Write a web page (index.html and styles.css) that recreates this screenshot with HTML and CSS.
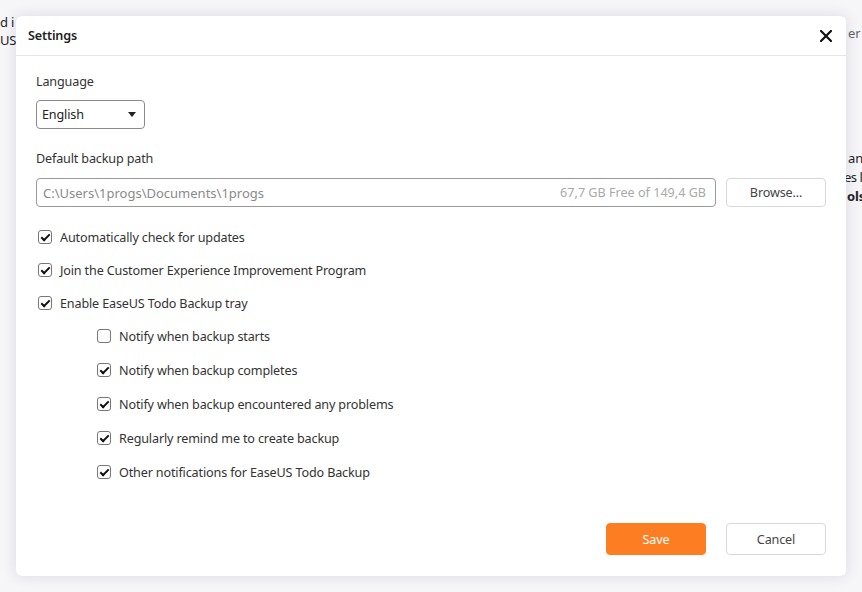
FILE: index.html
```html
<!DOCTYPE html>
<html>

<head>
    <title>Settings</title>
    <link rel="stylesheet" href="styles.css">
</head>

<body>

    <!-- app behind the dialog -->
    <div class="backdrop">
        <span class="bg-text bg-1">d i</span>
        <span class="bg-text bg-2">US</span>
        <span class="bg-text bg-3">er</span>
        <span class="bg-text bg-4">an</span>
        <span class="bg-text bg-5">es l</span>
        <span class="bg-text bg-6">ols</span>
    </div>

    <div class="dialog">
        <div class="dialog-header">
            <span class="dialog-title">Settings</span>
            <button class="close-btn">
                <svg width="12" height="12" viewBox="0 0 12 12">
                    <path d="M1 1 L11 11 M11 1 L1 11" stroke="#111" stroke-width="2.2" stroke-linecap="square" />
                </svg>
            </button>
        </div>

        <div class="dialog-body">
            <div class="label">Language</div>
            <div class="select">
                <span>English</span>
                <span class="caret"></span>
            </div>

            <div class="label label-path">Default backup path</div>
            <div class="path-row">
                <div class="path-input">
                    <span class="path">C:\Users\1progs\Documents\1progs</span>
                    <span class="free">67,7 GB Free of 149,4 GB</span>
                </div>
                <button class="btn btn-browse">Browse...</button>
            </div>

            <div class="checks">
                <label class="check"><span class="box on"></span>Automatically check for updates</label>
                <label class="check"><span class="box on"></span>Join the Customer Experience Improvement Program</label>
                <label class="check"><span class="box on"></span>Enable EaseUS Todo Backup tray</label>
            </div>

            <div class="checks sub">
                <label class="check"><span class="box"></span>Notify when backup starts</label>
                <label class="check"><span class="box on"></span>Notify when backup completes</label>
                <label class="check"><span class="box on"></span>Notify when backup encountered any problems</label>
                <label class="check"><span class="box on"></span>Regularly remind me to create backup</label>
                <label class="check"><span class="box on"></span>Other notifications for EaseUS Todo Backup</label>
            </div>
        </div>

        <div class="dialog-footer">
            <button class="btn btn-save">Save</button>
            <button class="btn">Cancel</button>
        </div>
    </div>

</body>

</html>
```

FILE: styles.css
```css
body {
    margin: 0;
    padding: 16px;
    background-color: #f6f6f8;
    font-family: "Noto Sans", "Open Sans", sans-serif;
    font-size: 12.6px;
    letter-spacing: -0.15px;
    color: #333;
}

.backdrop {
    position: absolute;
    inset: 0;
    overflow: hidden;
}

.bg-text {
    position: absolute;
    font-size: 13px;
    line-height: 14px;
    white-space: nowrap;
    color: #222;
}

.bg-1 { left: 0; top: 15px; }
.bg-2 { left: 0; top: 33px; }
.bg-3 { left: 848px; top: 26px; color: #666; }
.bg-4 { left: 848px; top: 151px; }
.bg-5 { left: 844px; top: 170px; letter-spacing: -0.5px; }
.bg-6 { left: 847px; top: 189px; font-weight: bold; }

.dialog {
    position: relative;
    width: 830px;
    height: 560px;
    background-color: #fff;
    border-radius: 6px;
    box-shadow: 0 0 14px rgba(70, 70, 120, 0.16);
    display: flex;
    flex-direction: column;
}

.dialog-header {
    height: 39px;
    border-bottom: 1px solid #e6e6e6;
    display: flex;
    align-items: center;
    justify-content: space-between;
    padding: 0 14px 0 12px;
}

.dialog-title {
    font-weight: 600;
    color: #222;
}

.close-btn {
    border: none;
    background: none;
    padding: 0;
    width: 12px;
    height: 12px;
    display: flex;
}

.dialog-body {
    flex: 1;
    padding: 17px 20px 0 20px;
}

.label {
    line-height: 18px;
}

.label-path {
    margin-top: 21px;
}

.select {
    margin-top: 9px;
    width: 94px;
    height: 27px;
    border: 1px solid #8a8a8a;
    border-radius: 4px;
    display: flex;
    align-items: center;
    justify-content: space-between;
    padding: 0 8px 0 5px;
    color: #222;
}

.caret {
    width: 0;
    height: 0;
    border-left: 4.5px solid transparent;
    border-right: 4.5px solid transparent;
    border-top: 5px solid #222;
}

.path-row {
    margin-top: 10px;
    display: flex;
    gap: 10px;
}

.path-input {
    flex: 1;
    height: 27px;
    border: 1px solid #9a9a9a;
    border-radius: 4px;
    display: flex;
    align-items: center;
    justify-content: space-between;
    padding: 0 9px 0 6px;
}

.path {
    color: #8a8a8a;
    font-size: 13px;
    letter-spacing: 0;
}

.free {
    color: #aaa;
    letter-spacing: 0;
}

.btn {
    width: 100px;
    height: 29px;
    border: 1px solid #d8d8d8;
    border-radius: 4px;
    background-color: #fff;
    font-family: inherit;
    font-size: 12.6px;
    letter-spacing: -0.15px;
    color: #444;
}

.checks {
    margin-top: 21px;
    display: flex;
    flex-direction: column;
    gap: 15px;
}

.checks.sub {
    margin-top: 15px;
    padding-left: 59px;
    gap: 16px;
}

.check {
    display: flex;
    align-items: center;
    height: 18px;
    color: #333;
}

.box {
    width: 12px;
    height: 12px;
    border: 1px solid #777;
    border-radius: 3px;
    margin: 0 8px 0 2px;
    position: relative;
}

.box.on::after {
    content: "";
    position: absolute;
    left: 3.5px;
    top: 0.5px;
    width: 3px;
    height: 7px;
    border-right: 2px solid #111;
    border-bottom: 2px solid #111;
    transform: rotate(45deg);
}

.dialog-footer {
    display: flex;
    justify-content: flex-end;
    gap: 20px;
    padding: 0 20px 21px 0;
}

.dialog-footer .btn {
    height: 32px;
}

.btn-save {
    background-color: #fd7e22;
    border-color: #fd7e22;
    color: #fff;
}
```
